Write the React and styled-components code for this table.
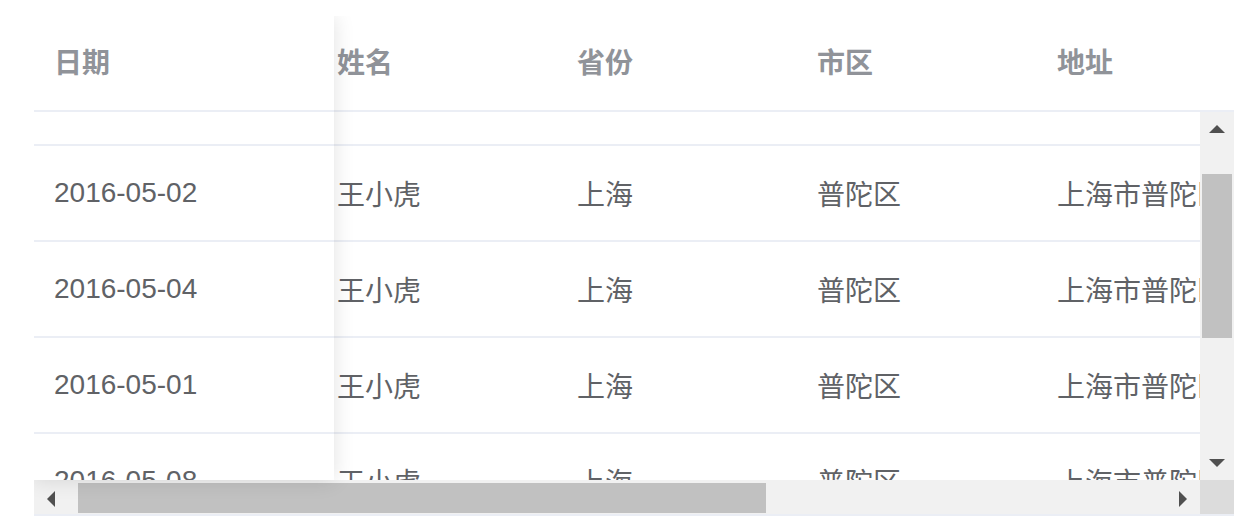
import React, { useLayoutEffect, useRef } from 'react'
import styled, { createGlobalStyle } from 'styled-components'

const ROW_H = 96
const BODY_W = 1166
const BODY_H = 368
const BAR = 34
const SCROLL_TOP = 62
const SCROLL_LEFT = 17

const columns = [
  { key: 'date', label: '日期', width: 300, fixed: true },
  { key: 'name', label: '姓名', width: 240 },
  { key: 'province', label: '省份', width: 240 },
  { key: 'city', label: '市区', width: 240 },
  { key: 'address', label: '地址', width: 840 }
]

const rows = ['2016-05-03', '2016-05-02', '2016-05-04', '2016-05-01', '2016-05-08', '2016-05-06', '2016-05-07']
  .map(date => ({
    date,
    name: '王小虎',
    province: '上海',
    city: '普陀区',
    address: '上海市普陀区金沙江路 1518 弄'
  }))

const totalW = columns.reduce((s, c) => s + c.width, 0)
const totalH = rows.length * ROW_H

// scrollbar thumb geometry
const vTrack = BODY_H - BAR * 2
const vThumb = vTrack * BODY_H / totalH
const vTop = SCROLL_TOP / (totalH - BODY_H) * (vTrack - vThumb)
const hTrack = BODY_W - BAR * 2
const hThumb = hTrack * BODY_W / totalW
const hLeft = SCROLL_LEFT / (totalW - BODY_W) * (hTrack - hThumb)

const GlobalStyle = createGlobalStyle`
  body {
    margin: 0;
    background: #fff;
    font-family: "Liberation Sans", "Noto Sans CJK SC", sans-serif;
  }
`

const Page = styled.div`
  padding: 16px 0 0 34px;
`

const Table = styled.div`
  position: relative;
  width: 1200px;
  overflow: hidden;
  border-bottom: 2px solid #ebeef5;
  font-size: 28px;
`

const ScrollPane = styled.div`
  overflow: hidden;
  width: ${p => p.$w}px;
  height: ${p => p.$h}px;
`

const Row = styled.div`
  display: flex;
`

const Cell = styled.div`
  flex: 0 0 ${p => p.$w}px;
  box-sizing: border-box;
  height: ${ROW_H}px;
  padding: 0 20px ${p => (p.$head ? 4 : 0)}px;
  display: flex;
  align-items: center;
  white-space: nowrap;
  overflow: hidden;
  border-bottom: 2px solid #ebeef5;
  background: #fff;
  color: ${p => (p.$head ? '#909399' : '#606266')};
  font-weight: ${p => (p.$head ? 700 : 400)};

  /* cells that sit under the fixed column keep their size but are not drawn */
  & > span {
    visibility: ${p => (p.$hidden ? 'hidden' : 'visible')};
  }
`

const Middle = styled.div`
  display: flex;
`

const Bottom = styled.div`
  display: flex;
  height: ${BAR}px;
`

const VBar = styled.div`
  width: ${BAR}px;
  height: ${BODY_H}px;
  background: #f1f1f1;
  display: flex;
  flex-direction: column;
`

const HBar = styled.div`
  width: ${BODY_W}px;
  height: ${BAR}px;
  background: #f1f1f1;
  display: flex;
`

const Button = styled.div`
  flex: 0 0 ${BAR}px;
  height: ${BAR}px;
  display: flex;
  align-items: center;
  justify-content: center;
  padding-top: ${p => (p.$h ? 4 : 0)}px;
  box-sizing: border-box;
`

const Arrow = styled.span`
  width: 0;
  height: 0;
  border: 8px solid transparent;
  ${p => p.$dir === 'up' && 'border-bottom-color: #505050; border-top-width: 0;'}
  ${p => p.$dir === 'down' && 'border-top-color: #505050; border-bottom-width: 0;'}
  ${p => p.$dir === 'left' && 'border-right-color: #505050; border-left-width: 0;'}
  ${p => p.$dir === 'right' && 'border-left-color: #505050; border-right-width: 0;'}
`

const Track = styled.div`
  position: relative;
  flex: 1;
`

const VThumb = styled.div`
  position: absolute;
  left: 2px;
  right: 2px;
  background: #c1c1c1;
`

const HThumb = styled.div`
  position: absolute;
  top: 3px;
  bottom: 1px;
  background: #c1c1c1;
`

const Corner = styled.div`
  width: ${BAR}px;
  height: ${BAR}px;
  background: #dcdcdc;
`

const Fixed = styled.div`
  position: absolute;
  top: 0;
  left: 0;
  width: ${columns[0].width}px;
  background: #fff;
  box-shadow: 0 0 20px rgba(0, 0, 0, 0.12);
  z-index: 2;
`

function useScroll (top, left) {
  const ref = useRef(null)
  useLayoutEffect(() => {
    if (ref.current) {
      ref.current.scrollTop = top
      ref.current.scrollLeft = left
    }
  }, [top, left])
  return ref
}

const HeadRow = ({ cols, hideFixed }) => (
  <Row>
    {cols.map(c => (
      <Cell key={c.key} $w={c.width} $head $hidden={hideFixed && c.fixed}>
        <span>{c.label}</span>
      </Cell>
    ))}
  </Row>
)

const BodyRows = ({ cols, hideFixed }) => rows.map(r => (
  <Row key={r.date}>
    {cols.map(c => (
      <Cell key={c.key} $w={c.width} $hidden={hideFixed && c.fixed}>
        <span>{r[c.key]}</span>
      </Cell>
    ))}
  </Row>
))

export default function App () {
  const headRef = useScroll(0, SCROLL_LEFT)
  const bodyRef = useScroll(SCROLL_TOP, SCROLL_LEFT)
  const fixedRef = useScroll(SCROLL_TOP, 0)
  const fixedCols = columns.filter(c => c.fixed)

  return (
    <Page>
      <GlobalStyle />
      <Table>
        <ScrollPane ref={headRef} $w={BODY_W + BAR} $h={ROW_H}>
          <HeadRow cols={columns} hideFixed />
        </ScrollPane>
        <Middle>
          <ScrollPane ref={bodyRef} $w={BODY_W} $h={BODY_H}>
            <BodyRows cols={columns} hideFixed />
          </ScrollPane>
          <VBar>
            <Button><Arrow $dir='up' /></Button>
            <Track>
              <VThumb style={{ top: vTop, height: vThumb }} />
            </Track>
            <Button><Arrow $dir='down' /></Button>
          </VBar>
        </Middle>
        <Bottom>
          <HBar>
            <Button $h><Arrow $dir='left' /></Button>
            <Track>
              <HThumb style={{ left: hLeft, width: hThumb }} />
            </Track>
            <Button $h><Arrow $dir='right' /></Button>
          </HBar>
          <Corner />
        </Bottom>
        <Fixed>
          <HeadRow cols={fixedCols} />
          <ScrollPane ref={fixedRef} $w={fixedCols[0].width} $h={BODY_H}>
            <BodyRows cols={fixedCols} />
          </ScrollPane>
        </Fixed>
      </Table>
    </Page>
  )
}
